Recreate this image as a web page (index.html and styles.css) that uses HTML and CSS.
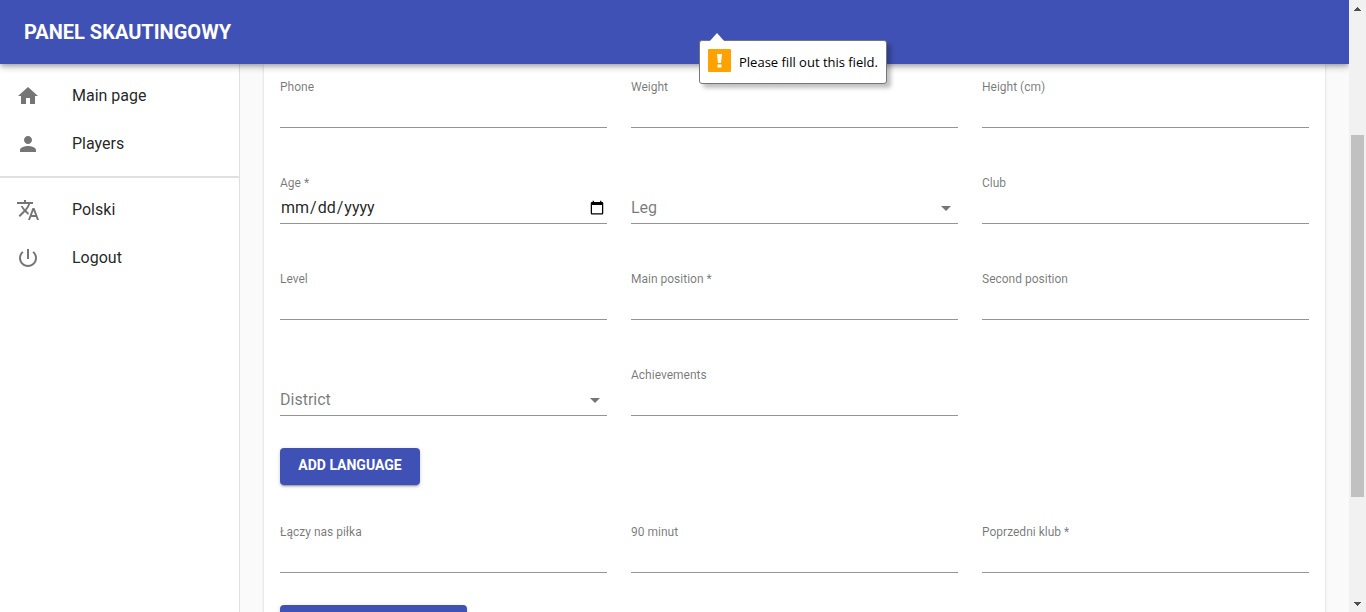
FILE: index.html
```html
<!DOCTYPE html>
<html lang="en">
<head>
<meta charset="utf-8">
<title>Panel skautingowy</title>
<link rel="stylesheet" href="styles.css">
</head>
<body>
<div class="app">
  <header class="appbar">
    <h1 class="appbar-title">PANEL SKAUTINGOWY</h1>
  </header>
  <div class="layout">
    <nav class="sidebar">
      <ul class="menu">
        <li><a class="menu-item" href="#"><svg class="icon" viewBox="0 0 24 24"><path d="M10 20v-6h4v6h5v-8h3L12 3 2 12h3v8z"/></svg><span>Main page</span></a></li>
        <li><a class="menu-item" href="#"><svg class="icon" viewBox="0 0 24 24"><path d="M12 12c2.210 0 4-1.790 4-4s-1.790-4-4-4-4 1.790-4 4 1.790 4 4 4zm0 2c-2.670 0-8 1.340-8 4v2h16v-2c0-2.660-5.330-4-8-4z"/></svg><span>Players</span></a></li>
      </ul>
      <ul class="menu menu-divided">
        <li><a class="menu-item" href="#"><svg class="icon" viewBox="0 0 24 24"><path d="M12.870 15.070l-2.540-2.510.030-.030c1.740-1.940 2.980-4.170 3.710-6.530H17V4h-7V2H8v2H1v1.990h11.170C11.500 7.920 10.440 9.750 9 11.350 8.070 10.320 7.300 9.190 6.690 8h-2c.730 1.630 1.730 3.170 2.980 4.560l-5.090 5.020L4 19l5-5 3.110 3.110.760-2.040zM18.500 10h-2L12 22h2l1.120-3h4.750L21 22h2l-4.500-12zm-2.620 7l1.620-4.330L19.120 17h-3.240z"/></svg><span>Polski</span></a></li>
        <li><a class="menu-item" href="#"><svg class="icon" viewBox="0 0 24 24"><path d="M13 3h-2v10h2V3zm4.830 2.170l-1.420 1.420C17.990 7.860 19 9.810 19 12c0 3.870-3.130 7-7 7s-7-3.130-7-7c0-2.190 1.010-4.140 2.580-5.420L6.170 5.170C4.230 6.820 3 9.260 3 12c0 4.970 4.030 9 9 9s9-4.030 9-9c0-2.740-1.230-5.180-3.170-6.830z"/></svg><span>Logout</span></a></li>
      </ul>
    </nav>
    <main class="content">
      <form class="card">
        <div class="fields">
          <div class="field"><label class="label" for="phone">Phone</label><input class="input" id="phone" type="text"></div>
          <div class="field"><label class="label" for="weight">Weight</label><input class="input" id="weight" type="text"></div>
          <div class="field"><label class="label" for="height">Height (cm)</label><input class="input" id="height" type="text"></div>
          <div class="field"><label class="label" for="age">Age *</label><input class="input" id="age" type="date"></div>
          <div class="field field-select">
            <select class="input select" aria-label="Leg"><option>Leg</option></select>
            <svg class="arrow" viewBox="0 0 24 24"><path d="M7 10l5 5 5-5z"/></svg>
          </div>
          <div class="field"><label class="label" for="club">Club</label><input class="input" id="club" type="text"></div>
          <div class="field"><label class="label" for="level">Level</label><input class="input" id="level" type="text"></div>
          <div class="field"><label class="label" for="main-position">Main position *</label><input class="input" id="main-position" type="text"></div>
          <div class="field"><label class="label" for="second-position">Second position</label><input class="input" id="second-position" type="text"></div>
          <div class="field field-select">
            <select class="input select" aria-label="District"><option>District</option></select>
            <svg class="arrow" viewBox="0 0 24 24"><path d="M7 10l5 5 5-5z"/></svg>
          </div>
          <div class="field"><label class="label" for="achievements">Achievements</label><input class="input" id="achievements" type="text"></div>
        </div>
        <button class="button" type="button">ADD LANGUAGE</button>
        <div class="fields fields-links">
          <div class="field"><label class="label" for="laczy">Łączy nas piłka</label><input class="input" id="laczy" type="text"></div>
          <div class="field"><label class="label" for="minut">90 minut</label><input class="input" id="minut" type="text"></div>
          <div class="field"><label class="label" for="klub">Poprzedni klub *</label><input class="input" id="klub" type="text"></div>
        </div>
        <button class="button button-wide" type="button" aria-label="Add"></button>
      </form>
    </main>
  </div>
</div>
<div class="scrollbar">
  <svg class="scroll-arrow" viewBox="0 0 17 17" shape-rendering="crispEdges"><path d="M8 7h1v1h1v1h1v1h1v1H5v-1h1V9h1V8h1z"/></svg>
  <div class="scroll-track"><div class="scroll-thumb"></div></div>
  <svg class="scroll-arrow" viewBox="0 0 17 17" shape-rendering="crispEdges"><path d="M8 11h1v-1h1V9h1V8h1V7H5v1h1v1h1v1h1z"/></svg>
</div>
<div class="tooltip" role="alert">
  <svg class="tooltip-tip" viewBox="0 0 18 9"><path class="tip-fill" d="M1 9L9 0l8 9z"/></svg>
  <svg class="tooltip-icon" viewBox="0 0 23 23"><rect class="warn-bg" width="23" height="23" rx="1"/><path class="warn-mark" d="M9 5h5l-1 9h-3zM9.500 15.500h4v3h-4z"/></svg>
  <span>Please fill out this field.</span>
</div>
</body>
</html>
```
FILE: styles.css
```css
* {
  box-sizing: border-box;
}

body {
  display: flex;
  height: 100vh;
  margin: 0;
  overflow: hidden;
  background: #fafafa;
  color: rgba(0, 0, 0, 0.87);
  font-family: Roboto, "Liberation Sans", sans-serif;
  font-size: 16px;
}

.app {
  display: flex;
  flex: 1;
  flex-direction: column;
  min-width: 0;
  overflow: hidden;
}

.appbar {
  display: flex;
  flex: none;
  align-items: center;
  height: 64px;
  padding: 0 24px;
  background: #3f51b5;
  color: #fff;
  box-shadow: 0 2px 4px -1px rgba(0, 0, 0, 0.2), 0 4px 5px 0 rgba(0, 0, 0, 0.14), 0 1px 10px 0 rgba(0, 0, 0, 0.12);
  z-index: 1;
}

.appbar-title {
  margin: 0;
  font-size: 20px;
  font-weight: 700;
  line-height: 32px;
}

.layout {
  display: flex;
  flex: 1;
  min-height: 0;
}

.sidebar {
  flex: none;
  width: 240px;
  border-right: 1px solid #e0e0e0;
  background: #fff;
}

.menu {
  margin: 0;
  padding: 8px 0;
  list-style: none;
}

.menu-divided {
  border-top: 2px solid #e0e0e0;
}

.menu-item {
  display: flex;
  align-items: center;
  gap: 32px;
  height: 48px;
  padding: 0 16px;
  color: inherit;
  line-height: 24px;
  text-decoration: none;
}

.icon {
  width: 24px;
  height: 24px;
  fill: #757575;
}

.content {
  flex: 1;
  min-width: 0;
  padding: 0 24px;
}

.card {
  padding: 16px;
  background: #fff;
  box-shadow: 0 2px 1px -1px rgba(0, 0, 0, 0.2), 0 1px 1px 0 rgba(0, 0, 0, 0.14), 0 1px 3px 0 rgba(0, 0, 0, 0.12);
}

.fields {
  display: grid;
  grid-template-columns: repeat(3, 1fr);
  gap: 48px 24px;
  margin-bottom: 32px;
}

.fields-links {
  margin-top: 40px;
}

.field {
  display: flex;
  flex-direction: column;
  min-width: 0;
  height: 48px;
}

.label {
  height: 16px;
  color: rgba(0, 0, 0, 0.54);
  font-size: 12px;
  line-height: 14px;
}

.input {
  width: 100%;
  height: 32px;
  padding: 0;
  border: 0;
  border-bottom: 1px solid #949494;
  border-radius: 0;
  outline: 0;
  background: transparent;
  color: inherit;
  font: inherit;
}

.field-select {
  position: relative;
  justify-content: flex-end;
}

.select {
  appearance: none;
  color: rgba(0, 0, 0, 0.54);
}

.arrow {
  position: absolute;
  right: 0;
  bottom: 4px;
  width: 24px;
  height: 24px;
  fill: #757575;
  pointer-events: none;
}

.button {
  display: block;
  min-width: 140px;
  height: 37px;
  padding: 5px 16px 8px;
  border: 0;
  border-radius: 4px;
  background: #3f51b5;
  color: #fff;
  font: 700 14px/24px Roboto, "Liberation Sans", sans-serif;
  box-shadow: 0 3px 1px -2px rgba(0, 0, 0, 0.2), 0 2px 2px 0 rgba(0, 0, 0, 0.14), 0 1px 5px 0 rgba(0, 0, 0, 0.12);
}

.button-wide {
  width: 187px;
}

.scrollbar {
  display: flex;
  flex: none;
  flex-direction: column;
  width: 17px;
  background: #f1f1f1;
}

.scroll-arrow {
  width: 17px;
  height: 17px;
  fill: #505050;
}

.scroll-track {
  flex: 1;
  padding: 118px 2px 0;
}

.scroll-thumb {
  height: 362px;
  background: #c1c1c1;
}

.tooltip {
  position: absolute;
  top: 40px;
  left: 699px;
  display: flex;
  align-items: flex-start;
  gap: 8px;
  padding: 8px;
  border: 1px solid #757575;
  border-radius: 3px;
  background: #fff;
  color: #000;
  font-family: "Open Sans", "Noto Sans", sans-serif;
  font-size: 13px;
  line-height: 26px;
  box-shadow: 4px 4px 4px rgba(0, 0, 0, 0.25);
  z-index: 2;
}

.tooltip-tip {
  position: absolute;
  top: -8px;
  left: 8px;
  width: 18px;
  height: 9px;
}

.tip-fill,
.warn-mark {
  fill: #fff;
}

.tooltip-icon {
  width: 23px;
  height: 23px;
}

.warn-bg {
  fill: #ffa200;
}
```
